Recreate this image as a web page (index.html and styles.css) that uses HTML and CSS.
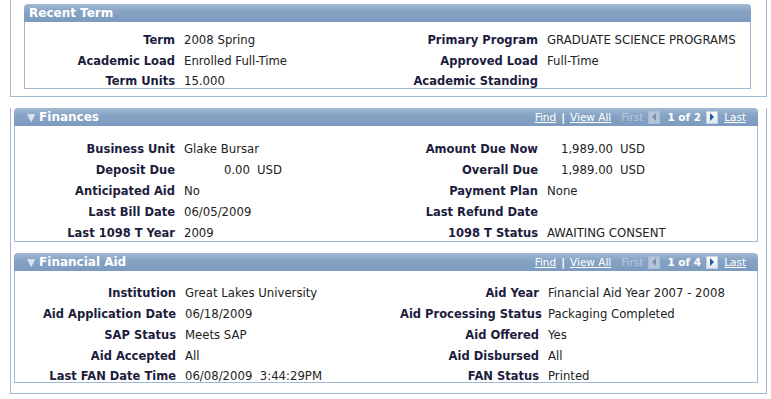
FILE: index.html
```html
<!DOCTYPE html>
<html lang="en">

<head>
    <meta charset="UTF-8">
    <meta name="viewport" content="width=device-width, initial-scale=1.0">
    <title>Student Center</title>
    <link rel="stylesheet" href="styles.css">
</head>

<body>
    <!-- recent term group -->
    <div class="group group-top">
        <div class="panel panel-inset">
            <div class="panel-head">
                <span class="title">Recent Term</span>
            </div>
            <div class="panel-body grid">
                <div class="lbl">Term</div>
                <div class="val">2008 Spring</div>
                <div class="lbl">Primary Program</div>
                <div class="val">GRADUATE SCIENCE PROGRAMS</div>

                <div class="lbl">Academic Load</div>
                <div class="val">Enrolled Full-Time</div>
                <div class="lbl">Approved Load</div>
                <div class="val">Full-Time</div>

                <div class="lbl">Term Units</div>
                <div class="val">15.000</div>
                <div class="lbl">Academic Standing</div>
                <div class="val"></div>
            </div>
        </div>
    </div>

    <div class="group">
        <!-- finances -->
        <div class="panel panel-fin">
            <div class="panel-head">
                <span class="arrow">&#9660;</span>
                <span class="title">Finances</span>
                <div class="nav">
                    <a href="#">Find</a>
                    <span class="sep">|</span>
                    <a href="#">View All</a>
                    <span class="off">First</span>
                    <span class="btn btn-off"><span class="tri-left"></span></span>
                    <b class="count">1 of 2</b>
                    <span class="btn"><span class="tri-right"></span></span>
                    <a href="#">Last</a>
                </div>
            </div>
            <div class="panel-body grid">
                <div class="lbl">Business Unit</div>
                <div class="val">Glake Bursar</div>
                <div class="lbl">Amount Due Now</div>
                <div class="val"><span class="amt">1,989.00</span><span class="cur">USD</span></div>

                <div class="lbl">Deposit Due</div>
                <div class="val"><span class="amt">0.00</span><span class="cur">USD</span></div>
                <div class="lbl">Overall Due</div>
                <div class="val"><span class="amt">1,989.00</span><span class="cur">USD</span></div>

                <div class="lbl">Anticipated Aid</div>
                <div class="val">No</div>
                <div class="lbl">Payment Plan</div>
                <div class="val">None</div>

                <div class="lbl">Last Bill Date</div>
                <div class="val">06/05/2009</div>
                <div class="lbl">Last Refund Date</div>
                <div class="val"></div>

                <div class="lbl">Last 1098 T Year</div>
                <div class="val">2009</div>
                <div class="lbl">1098 T Status</div>
                <div class="val">AWAITING CONSENT</div>
            </div>
        </div>

        <!-- financial aid -->
        <div class="panel panel-aid">
            <div class="panel-head">
                <span class="arrow">&#9660;</span>
                <span class="title">Financial Aid</span>
                <div class="nav">
                    <a href="#">Find</a>
                    <span class="sep">|</span>
                    <a href="#">View All</a>
                    <span class="off">First</span>
                    <span class="btn btn-off"><span class="tri-left"></span></span>
                    <b class="count">1 of 4</b>
                    <span class="btn"><span class="tri-right"></span></span>
                    <a href="#">Last</a>
                </div>
            </div>
            <div class="panel-body grid">
                <div class="lbl">Institution</div>
                <div class="val">Great Lakes University</div>
                <div class="lbl">Aid Year</div>
                <div class="val">Financial Aid Year 2007 - 2008</div>

                <div class="lbl">Aid Application Date</div>
                <div class="val">06/18/2009</div>
                <div class="lbl">Aid Processing Status</div>
                <div class="val">Packaging Completed</div>

                <div class="lbl">SAP Status</div>
                <div class="val">Meets SAP</div>
                <div class="lbl">Aid Offered</div>
                <div class="val">Yes</div>

                <div class="lbl">Aid Accepted</div>
                <div class="val">All</div>
                <div class="lbl">Aid Disbursed</div>
                <div class="val">All</div>

                <div class="lbl">Last FAN Date Time</div>
                <div class="val">06/08/2009&nbsp;&nbsp;3:44:29PM</div>
                <div class="lbl">FAN Status</div>
                <div class="val">Printed</div>
            </div>
        </div>
    </div>
</body>

</html>
```

FILE: styles.css
```css
* {
    padding: 0;
    margin: 0;
    box-sizing: border-box;
}

body {
    background-color: white;
    font-family: "DejaVu Sans", Verdana, sans-serif;
    font-size: 11.7px;
    color: #000;
}

.group {
    margin-left: 10px;
    width: 757px;
    border: 1px solid #a3b9d3;
    border-top: none;
    padding-bottom: 10px;
}

.group-top {
    padding-top: 4px;
    padding-bottom: 7px;
}

.panel {
    margin: 11px 8px 0 3px;
}

.panel-inset {
    margin: 0 15px 0 13px;
}

.panel-head {
    height: 18px;
    display: flex;
    align-items: center;
    padding-left: 5px;
    border-radius: 4px 4px 0 0;
    background: linear-gradient(#a3bad3, #87a3c4 40%, #7c9bbf);
    color: white;
}

.panel-fin .panel-head,
.panel-aid .panel-head {
    padding-left: 13px;
}

.title {
    font-weight: bold;
    font-size: 12px;
}

.arrow {
    font-size: 10.5px;
    color: #dbe6f2;
    margin-right: 4px;
}

.nav {
    margin-left: auto;
    display: flex;
    align-items: center;
    padding-right: 12px;
    font-size: 10.5px;
}

.nav a {
    color: white;
    text-decoration: underline;
}

.sep {
    font-weight: bold;
    margin: 0 5px;
}

.off {
    color: #b9cadd;
    margin: 0 5px 0 10px;
}

.count {
    margin: 0 5px 0 7px;
}

.btn {
    width: 12px;
    height: 13px;
    background: linear-gradient(#ffffff, #dfe7f1);
    border: 1px solid #c6d3e2;
    display: flex;
    align-items: center;
    justify-content: center;
    margin-right: 6px;
}

.btn-off {
    background: #b4c5d9;
    border-color: #aabdd3;
    margin-right: 0;
}

.tri-left {
    width: 0;
    height: 0;
    border-top: 4px solid transparent;
    border-bottom: 4px solid transparent;
    border-right: 4px solid #7890ab;
}

.tri-right {
    width: 0;
    height: 0;
    border-top: 4px solid transparent;
    border-bottom: 4px solid transparent;
    border-left: 4px solid #1f5a96;
}

.panel-body {
    border: 1px solid #a3b9d3;
    border-top: none;
    background: white;
}

.grid {
    display: grid;
    grid-template-columns: 160px 224px 139px 1fr;
    grid-auto-rows: 21px;
    align-items: center;
    padding-top: 12px;
}

.panel-fin .grid {
    height: 116px;
}

.panel-inset .grid {
    grid-template-columns: 150px 224px 139px 1fr;
    grid-auto-rows: 20.5px;
    padding-top: 8px;
    height: 67px;
}

.panel-aid .grid {
    grid-template-columns: 161px 224px 139px 1fr;
    grid-auto-rows: 20.75px;
    padding-top: 12px;
    height: 112px;
}

.lbl {
    text-align: right;
    font-weight: bold;
    font-size: 11.5px;
    color: #1c1c3c;
    white-space: nowrap;
}

.val {
    padding-left: 9px;
    white-space: nowrap;
    color: #222;
}

.amt {
    display: inline-block;
    width: 66px;
    text-align: right;
}

.cur {
    margin-left: 7px;
}
```
